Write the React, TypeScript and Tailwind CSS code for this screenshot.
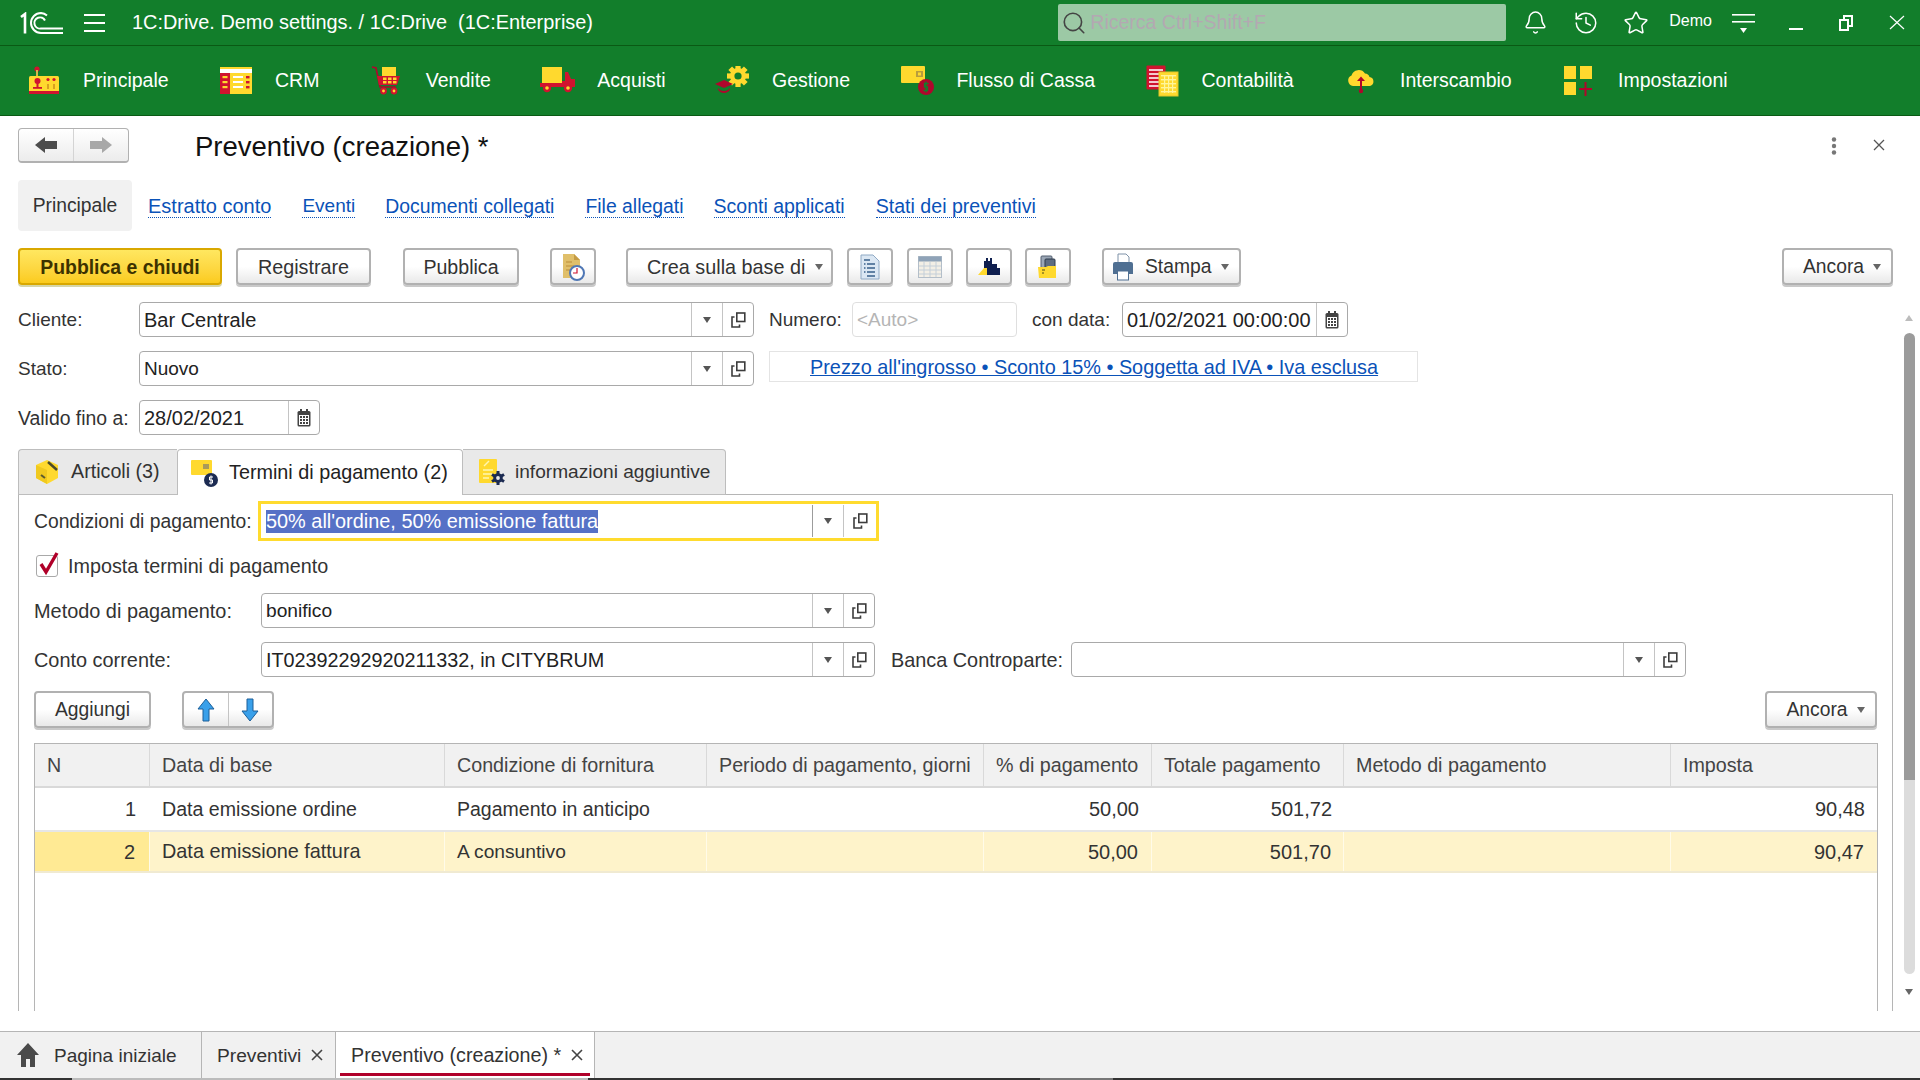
import React from "react";
import { Bell, History, Star, Search } from "lucide-react";

const Tri = ({ c = "#555" }: { c?: string }) => (
  <svg width="8" height="6" viewBox="0 0 8 6"><path d="M0 0H8L4 6Z" fill={c} /></svg>
);
const OpenIco = () => (
  <svg width="15" height="16" viewBox="0 0 15 16" fill="none" stroke="#3c3c3c" strokeWidth="1.6">
    <rect x="5.8" y="1" width="8" height="8.5" />
    <path d="M3.5 5H1V15H8.5V12.5" />
  </svg>
);
const CalIco = () => (
  <svg width="14" height="18" viewBox="0 0 14 18">
    <rect x="0.5" y="2" width="13" height="15.5" rx="1.5" fill="#444" />
    <rect x="3" y="0" width="2" height="4" fill="#444" />
    <rect x="9" y="0" width="2" height="4" fill="#444" />
    <rect x="2" y="6" width="10" height="10" fill="#fff" />
    {[7, 10, 13].map((y) => [3, 6, 9].map((x) => <rect key={x + "-" + y} x={x} y={y} width="2" height="2" fill="#444" />))}
  </svg>
);

function Combo({ cls, text, tcls = "" }: { cls: string; text?: string; tcls?: string }) {
  return (
    <div className={"flex h-[35px] border border-[#a9a9a9] rounded-[4px] bg-white " + cls}>
      <div className={"flex-1 pl-[4px] leading-[34px] text-[#222] whitespace-nowrap " + tcls}>{text}</div>
      <div className="w-[31px] border-l border-[#c4c4c4] flex items-center justify-center"><Tri /></div>
      <div className="w-[31px] border-l border-[#c4c4c4] flex items-center justify-center"><OpenIco /></div>
    </div>
  );
}
function DateField({ cls, text }: { cls: string; text: string }) {
  return (
    <div className={"flex h-[35px] border border-[#a9a9a9] rounded-[4px] bg-white " + cls}>
      <div className="flex-1 pl-[4px] leading-[34px] text-[#222] text-[20px] whitespace-nowrap">{text}</div>
      <div className="w-[31px] border-l border-[#c4c4c4] flex items-center justify-center"><CalIco /></div>
    </div>
  );
}
const btnBase =
  "flex items-center h-[37px] border-2 border-[#b1b1b1] rounded-[4px] bg-linear-to-b from-white via-white to-[#e9e9e9] shadow-[0_2px_0_#c9c9c9] text-[#333] whitespace-nowrap";
const btn = btnBase + " justify-center";
const Label = ({ children }: { children: React.ReactNode }) => <span className="pt-[2px]">{children}</span>;

function IconBtn({ cls, children }: { cls: string; children: React.ReactNode }) {
  return <div className={btn + " w-[46px] " + cls}>{children}</div>;
}

/* nav icons */
const Y = "#ffd92e";
const R = "#d0132f";
const D = "#b0062c";
const IcoMain = () => (
  <svg width="32" height="30" viewBox="0 0 32 30">
    <circle cx="9" cy="3" r="2.6" fill={R} />
    <rect x="8" y="4" width="2" height="7" fill="#d9b84a" />
    <rect x="1" y="10" width="30" height="17" rx="1.5" fill={Y} />
    <rect x="1" y="25" width="30" height="3" fill={R} />
    <circle cx="9.5" cy="15" r="3" fill={R} />
    <rect x="8.5" y="17" width="2" height="4" fill={R} />
    <rect x="5" y="21" width="9" height="1.8" fill={R} />
    <circle cx="20" cy="13.5" r="1.6" fill={R} />
    <circle cx="26" cy="13.5" r="1.6" fill={R} />
    <rect x="19" y="18" width="2" height="5" fill="#d9a020" />
    <rect x="25" y="18" width="2" height="5" fill="#d9a020" />
  </svg>
);
const IcoCrm = () => (
  <svg width="34" height="30" viewBox="0 0 34 30">
    <rect x="1" y="1" width="32" height="27" fill={Y} />
    <rect x="1" y="3" width="32" height="4" fill="#fff" />
    <rect x="1" y="7" width="10" height="21" fill={R} />
    {[10, 15, 20].map((y) => <rect key={y} x="3.5" y={y} width="5" height="2.2" fill={Y} />)}
    {[10, 15, 20].map((y) => <rect key={y} x="14" y={y} width="10" height="2" fill="#fff" />)}
    {[10, 15, 20].map((y) => <rect key={y} x="27" y={y} width="3.5" height="2.4" fill={R} />)}
  </svg>
);
const IcoCart = () => (
  <svg width="32" height="30" viewBox="0 0 32 30">
    <rect x="11" y="1" width="14" height="10" fill={Y} />
    <path d="M1 1L5 2L9 21H25" fill="none" stroke={D} strokeWidth="1.6" />
    <path d="M6 10H29L26 19H8Z" fill={R} />
    {[12, 17, 22].map((x) => <rect key={x} x={x} y="11.5" width="3.5" height="2.5" fill={Y} />)}
    {[12, 17, 22].map((x) => <rect key={x} x={x} y="15" width="3.5" height="2.5" fill={Y} />)}
    <circle cx="12.5" cy="25" r="3.4" fill={R} /><circle cx="12.5" cy="25" r="1.4" fill={Y} />
    <circle cx="23" cy="25" r="3.4" fill={R} /><circle cx="23" cy="25" r="1.4" fill={Y} />
  </svg>
);
const IcoTruck = () => (
  <svg width="36" height="28" viewBox="0 0 36 28">
    <rect x="2" y="0" width="20" height="16" fill={Y} />
    <path d="M0 16H22V1L22 14H25V5H28L31 12H35V20H0Z" fill={R} />
    <circle cx="7" cy="21" r="4.2" fill={R} /><circle cx="7" cy="21" r="1.8" fill={Y} />
    <circle cx="28" cy="21" r="4.2" fill={R} /><circle cx="28" cy="21" r="1.8" fill={Y} />
  </svg>
);
const IcoGear = () => (
  <svg width="36" height="30" viewBox="0 0 36 30">
    <g transform="translate(23 10)">
      {[0, 45, 90, 135].map((a) => <rect key={a} x="-2.6" y="-11" width="5.2" height="22" fill={Y} transform={`rotate(${a})`} />)}
      <circle r="8" fill={Y} /><circle r="3.6" fill="#127e2b" />
    </g>
    <path d="M0 18L9 14L18 18L9 22Z" fill={D} />
    <path d="M3 22C5 26 13 26 15 22L15 23.5C13 28 5 28 3 23.5Z" fill={D} />
  </svg>
);
const IcoWallet = () => (
  <svg width="33" height="30" viewBox="0 0 33 30">
    <rect x="0" y="0" width="24" height="17" rx="1" fill={Y} />
    <rect x="15" y="5" width="7" height="6" fill="#b99d3c" /><rect x="17" y="6.5" width="3" height="3" fill={Y} />
    <circle cx="25" cy="21" r="8" fill={D} />
    <path d="M27.5 17.5H23.5V21H26.5V24.5H22.5M25 15.5V26.5" fill="none" stroke="#127e2b" strokeWidth="1.3" />
  </svg>
);
const IcoBooks = () => (
  <svg width="33" height="32" viewBox="0 0 33 32">
    <rect x="0.5" y="0.5" width="19" height="24" rx="1" fill={R} />
    {[4, 8, 12, 16, 20].map((y) => <rect key={y} x="3" y={y} width="14" height="2" fill="#f3c9cf" />)}
    <rect x="13" y="7" width="19" height="24" fill={Y} stroke="#e3c62a" />
    {[10, 14, 18, 22, 26].map((y) => <rect key={y} x="15" y={y} width="15" height="1.4" fill="#fff59b" />)}
    {[18, 22, 26].map((x) => <rect key={x} x={x} y="10" width="1.2" height="18" fill="#fff59b" />)}
  </svg>
);
const IcoCloud = () => (
  <svg width="28" height="26" viewBox="0 0 28 26">
    <path d="M6 18A5.5 5.5 0 0 1 4.5 7.5A7.5 7.5 0 0 1 18 5.5A5 5 0 0 1 22.5 9A4.6 4.6 0 0 1 23 18Z" fill={Y} />
    <path d="M14 11V23" stroke={D} strokeWidth="2" /><path d="M10 13L14 8.5L18 13Z" fill={D} /><circle cx="14" cy="23" r="2.2" fill={D} />
  </svg>
);
const IcoGrid = () => (
  <svg width="32" height="31" viewBox="0 0 32 31">
    <rect x="1" y="1" width="12" height="13" fill={Y} />
    <rect x="17" y="1" width="12" height="13" fill={Y} />
    <rect x="1" y="17" width="12" height="13" fill={Y} />
    <path d="M22.5 17V31M16 24H29" stroke={D} strokeWidth="2" />
  </svg>
);

const navItems: [React.ReactNode, string][] = [
  [<IcoMain />, "Principale"],
  [<IcoCrm />, "CRM"],
  [<IcoCart />, "Vendite"],
  [<IcoTruck />, "Acquisti"],
  [<IcoGear />, "Gestione"],
  [<IcoWallet />, "Flusso di Cassa"],
  [<IcoBooks />, "Contabilità"],
  [<IcoCloud />, "Interscambio"],
  [<IcoGrid />, "Impostazioni"],
];

const Logo = () => (
  <svg width="44" height="22" viewBox="0 0 44 22" fill="none" stroke="#fff">
    <path d="M1 5L5 2V21.5" strokeWidth="2.6" />
    <path d="M27 3.5A10 10 0 0 0 21 1A10 10 0 0 0 21 21H43" strokeWidth="2" />
    <path d="M25 8.5A5.6 5.6 0 1 0 21 16.5H43" strokeWidth="2" />
  </svg>
);

const links: [string, string][] = [
  ["Estratto conto", "ml-[16px] text-[20px]"],
  ["Eventi", "ml-[31px] text-[19px]"],
  ["Documenti collegati", "ml-[30px] text-[19.4px]"],
  ["File allegati", "ml-[31px] text-[19.4px]"],
  ["Sconti applicati", "ml-[30px] text-[19.5px]"],
  ["Stati dei preventivi", "ml-[31px] text-[19.6px]"],
];

const cols = "grid grid-cols-[115px_295px_262px_277px_168px_192px_327px_207px]";
const heads = ["N", "Data di base", "Condizione di fornitura", "Periodo di pagamento, giorni", "% di pagamento", "Totale pagamento", "Metodo di pagamento", "Imposta"];

function Row({ cells, sizes, active }: { cells: string[]; sizes: string[]; active?: boolean }) {
  const pad = ["pl-[12px] pr-[14px] justify-end", "px-[12px]", "px-[12px]", "px-[12px]", "pl-[12px] pr-[13px] justify-end", "px-[12px] justify-end", "px-[12px]", "pl-[12px] pr-[13px] justify-end"];
  return (
    <div className={cols + (active ? " h-[41px] border-b-2 border-[#f0ead2] bg-[#fef3ca]" : " h-[44px] border-b-2 border-[#e6e6e6] bg-white")}>
      {cells.map((c, i) => (
        <div
          key={i}
          className={
            "flex items-center whitespace-nowrap " + pad[i] + " " + sizes[i] + " " +
            (active ? "border-r border-[#fffbe8] " : "") +
            (active && i === 0 ? "bg-[#ffea94] " : "")
          }
        >
          {c}
        </div>
      ))}
    </div>
  );
}

export default function App() {
  return (
    <div className="w-[1920px] h-[1080px] overflow-hidden flex flex-col bg-white font-['Liberation_Sans',Arial,sans-serif] text-[19.3px] text-[#333]">
      {/* title bar */}
      <header className="h-[46px] shrink-0 flex items-center pr-[15px] bg-[#127e2b] border-b border-[#0a5a14] text-white">
        <div className="ml-[20px]"><Logo /></div>
        <div className="ml-[20px] flex flex-col gap-[6px] w-[21px]">
          <div className="h-[2px] bg-white" /><div className="h-[2px] bg-white" /><div className="h-[2px] bg-white" />
        </div>
        <div className="ml-[27px] flex-1 text-[19.9px] whitespace-pre">1C:Drive. Demo settings. / 1C:Drive  (1C:Enterprise)</div>
        <div className="w-[448px] h-[37px] bg-[#9cc9a5] rounded-[2px] flex items-center pl-[3px] text-[19.5px] text-[#b3a8b2]">
          <Search size={26} strokeWidth={1.5} color="#444" />
          <span className="ml-[3px]">Ricerca Ctrl+Shift+F</span>
        </div>
        <Bell size={25} strokeWidth={1.4} className="ml-[17px]" />
        <History size={26} strokeWidth={1.4} className="ml-[25px]" />
        <Star size={26} strokeWidth={1.4} className="ml-[24px]" />
        <span className="ml-[20px] text-[16px] -mt-[3px]">Demo</span>
        <svg width="24" height="24" viewBox="0 0 24 24" className="ml-[20px]" fill="#fff">
          <rect x="0" y="3" width="23" height="1.6" /><rect x="0" y="10" width="23" height="1.6" /><path d="M8 17H15L11.5 22Z" />
        </svg>
        <div className="ml-[33px] w-[14px] h-[2px] bg-white mt-[12px]" />
        <svg width="14" height="16" viewBox="0 0 14 16" className="ml-[36px]" fill="none" stroke="#fff" strokeWidth="2">
          <rect x="5" y="1" width="8" height="10" /><rect x="1" y="5" width="8" height="10" fill="#127e2b" />
        </svg>
        <svg width="16" height="15" viewBox="0 0 16 15" className="ml-[36px]" fill="none" stroke="#fff" strokeWidth="1.2">
          <path d="M1 1L15 14M15 1L1 14" />
        </svg>
      </header>

      {/* section nav */}
      <nav className="h-[70px] shrink-0 flex items-center pl-[26px] gap-[49.4px] bg-[#127e2b] border-b border-[#0a5a14] text-white text-[19.5px]">
        {navItems.map(([ico, label]) => (
          <div key={label} className="flex items-center whitespace-nowrap">
            <div className="w-[36px] mr-[21px] flex justify-center">{ico}</div>
            <span>{label}</span>
          </div>
        ))}
      </nav>

      {/* title row */}
      <div className="h-[64px] shrink-0 flex pt-[12px] pl-[18px] pr-[35px]">
        <div className="flex w-[111px] h-[35px] border border-[#b1b1b1] border-b-2 rounded-[4px] bg-linear-to-b from-white to-[#ececec]">
          <div className="flex-1 flex items-center justify-center border-r border-[#d4d4d4]">
            <svg width="22" height="16" viewBox="0 0 22 16"><path d="M0 8L10 0V4H22V12H10V16Z" fill="#4d4d4d" /></svg>
          </div>
          <div className="flex-1 flex items-center justify-center">
            <svg width="22" height="16" viewBox="0 0 22 16"><path d="M22 8L12 0V4H0V12H12V16Z" fill="#a8a8a8" /></svg>
          </div>
        </div>
        <div className="ml-[66px] pt-[3px] flex-1 text-[27.5px] leading-[32px] text-[#111]">Preventivo (creazione) *</div>
        <svg width="6" height="18" viewBox="0 0 6 18" className="mt-[9px]" fill="#777">
          <circle cx="3" cy="2.5" r="2.2" /><circle cx="3" cy="9" r="2.2" /><circle cx="3" cy="15.5" r="2.2" />
        </svg>
        <svg width="12" height="12" viewBox="0 0 12 12" className="ml-[36px] mt-[11px]" fill="none" stroke="#555" strokeWidth="1.3">
          <path d="M1 1L11 11M11 1L1 11" />
        </svg>
      </div>

      {/* form links */}
      <div className="h-[51px] shrink-0 flex items-center pl-[18px]">
        <div className="w-[114px] h-[51px] pt-[2px] bg-[#f1f1f1] rounded-[4px] flex items-center justify-center text-[#333]">Principale</div>
        {links.map(([t, m]) => (
          <span key={t} className={m + " mt-[2px] text-[#0a52b8] border-b border-dotted border-[#0a52b8] leading-[22px] whitespace-nowrap"}>{t}</span>
        ))}
      </div>

      {/* toolbar */}
      <div className="h-[39px] mt-[17px] shrink-0 flex pl-[18px] pr-[27px]">
        <div className="flex items-center justify-center h-[37px] w-[204px] pt-[2px] border-2 border-[#d9a800] rounded-[4px] bg-linear-to-b from-[#ffe75f] to-[#fbcb1b] shadow-[0_2px_0_#d6d6a8] font-bold text-[#3c3200] text-[19.4px]">Pubblica e chiudi</div>
        <div className={btn + " ml-[14px] w-[135px] text-[19.8px]"}><Label>Registrare</Label></div>
        <div className={btn + " ml-[32px] w-[116px] text-[19.6px]"}><Label>Pubblica</Label></div>
        <IconBtn cls="ml-[31px]">
          <svg width="24" height="28" viewBox="0 0 24 28">
            <path d="M2 1H13L19 7V25H2Z" fill="#e0bf6a" /><path d="M13 1L19 7H13Z" fill="#c49b45" />
            <path d="M5 9H11M5 13H13M5 17H11" stroke="#c79f4a" strokeWidth="1.3" />
            <circle cx="16" cy="20" r="7" fill="#fff" stroke="#4f77b5" strokeWidth="2" /><path d="M16 15V20H12" stroke="#d0132f" strokeWidth="1.2" fill="none" />
          </svg>
        </IconBtn>
        <div className={btnBase + " ml-[30px] w-[207px] gap-[10px] pl-[19px] text-[19.8px]"}><Label>Crea sulla base di</Label><Tri c="#666" /></div>
        <IconBtn cls="ml-[14px]">
          <svg width="20" height="26" viewBox="0 0 20 26">
            <path d="M1 1H13L19 7V25H1Z" fill="#dbe7f3" stroke="#8fa9c4" />
            <path d="M4 6H10M7 10H15M4 10H5.5M7 14H15M4 14H5.5M7 18H15M4 18H5.5M7 22H15" stroke="#38608a" strokeWidth="1.3" />
          </svg>
        </IconBtn>
        <IconBtn cls="ml-[14px]">
          <svg width="24" height="22" viewBox="0 0 24 22">
            <rect x="0.5" y="0.5" width="23" height="21" fill="#f3efe6" stroke="#b3bec9" /><rect x="0.5" y="0.5" width="23" height="5" fill="#8fa3b8" />
            <path d="M6 6V21M12 6V21M18 6V21M1 10H23M1 14H23M1 18H23" stroke="#c4cfd9" />
          </svg>
        </IconBtn>
        <IconBtn cls="ml-[13px]">
          <svg width="24" height="18" viewBox="0 0 24 18">
            <path d="M1 17L7 10H14V17Z" fill={Y} />
            <path d="M7 10V3H9V0H11V3H13V0H15V6H20V10H23V17H10V10Z" fill="#0f1f4f" />
          </svg>
        </IconBtn>
        <IconBtn cls="ml-[13px]">
          <svg width="20" height="24" viewBox="0 0 20 24">
            <rect x="3" y="1" width="11" height="12" rx="1" fill="#9aa6b5" stroke="#525f70" />
            <rect x="7" y="4" width="10" height="10" rx="1" fill="#5d6c80" stroke="#2f3a4a" />
            <path d="M0 12H8L10 11H18V23H1Z" fill={Y} />
            <path d="M4 15H7M4 18H6" stroke="#8a7a20" strokeWidth="1.4" />
          </svg>
        </IconBtn>
        <div className={btnBase + " ml-[31px] w-[139px] pl-[8px]"}>
          <svg width="22" height="28" viewBox="0 0 22 28" className="mr-[11px]">
            <path d="M6 1H14L17 4V10H6Z" fill="#fff" stroke="#7f92a8" />
            <path d="M1 11Q1 9 3 9H19Q21 9 21 11V21H17V18H5V21H1Z" fill="#4f6f92" />
            <rect x="5.5" y="18" width="11" height="9" fill="#fff" stroke="#4f6f92" />
          </svg>
          <Label>Stampa</Label><div className="ml-[10px]"><Tri c="#666" /></div>
        </div>
        <div className="flex-1" />
        <div className={btn + " w-[111px] gap-[9px] pl-[9px]"}><Label>Ancora</Label><Tri c="#666" /></div>
      </div>

      {/* form */}
      <div className="h-[709px] mt-[15px] shrink-0 flex overflow-hidden">
        <div className="w-[1903px] shrink-0 pl-[18px] overflow-hidden">
          <div className="flex h-[35px] leading-[36px]">
            <div className="w-[121px] text-[19px]">Cliente:</div>
            <Combo cls="w-[615px]" text="Bar Centrale" tcls="text-[20px]" />
            <div className="ml-[15px] w-[83px] text-[19px]">Numero:</div>
            <div className="w-[165px] h-[35px] border border-[#dfdfdf] rounded-[4px] pl-[4px] leading-[33px] text-[#b5b5b5] text-[19px]">&lt;Auto&gt;</div>
            <div className="ml-[15px] w-[90px] text-[19px] whitespace-nowrap">con data:</div>
            <DateField cls="w-[226px]" text="01/02/2021 00:00:00" />
          </div>
          <div className="flex mt-[14px] h-[35px]">
            <div className="w-[121px] leading-[35px] text-[19px]">Stato:</div>
            <Combo cls="w-[615px]" text="Nuovo" tcls="text-[19px]" />
            <div className="ml-[15px] w-[649px] h-[31px] border border-[#e4e4e4] pl-[40px] leading-[30px] text-[#0a52b8] underline whitespace-nowrap text-[19.85px]">
              Prezzo all'ingrosso • Sconto 15% • Soggetta ad IVA • Iva esclusa
            </div>
          </div>
          <div className="flex mt-[14px] h-[35px]">
            <div className="w-[121px] leading-[36px] whitespace-nowrap text-[19.4px]">Valido fino a:</div>
            <DateField cls="w-[181px]" text="28/02/2021" />
          </div>

          {/* tabs */}
          <div className="flex mt-[14px] h-[46px] w-[1875px] border-b border-[#b5b5b5]">
            <div className="w-[159px] h-[46px] flex items-center pl-[15px] bg-[#e9e9e9] border border-[#bdbdbd] border-r-0 rounded-tl-[4px]">
              <svg width="26" height="26" viewBox="0 0 26 26">
                <path d="M13 1L24 6V19L13 25L2 19V6Z" fill={Y} />
                <path d="M2 6L13 11V25L2 19Z" fill="#f0c91f" />
                <path d="M14 3L23 11" stroke="#4a4a2a" strokeWidth="2.4" fill="none" />
                <path d="M7 16L11 19" stroke="#5a5a30" strokeWidth="2" />
              </svg>
              <span className="ml-[11px] whitespace-nowrap text-[19.7px]">Articoli (3)</span>
            </div>
            <div className="w-[286px] h-[46px] flex items-center pl-[12px] bg-white border border-[#bdbdbd] border-b-0 rounded-t-[4px] relative z-10">
              <svg width="28" height="28" viewBox="0 0 28 28">
                <rect x="1" y="1" width="21" height="15" rx="1" fill={Y} />
                <rect x="13" y="5" width="6" height="5" fill="#a99a5a" />
                <circle cx="21" cy="21" r="7" fill="#1c2b52" />
                <path d="M23 18H19.5V21H22.5V24H19M21 16.5V25.5" fill="none" stroke="#fff" strokeWidth="1" />
              </svg>
              <span className="ml-[11px] whitespace-nowrap text-[#222] text-[19.8px]">Termini di pagamento (2)</span>
            </div>
            <div className="w-[263px] h-[46px] flex items-center pl-[15px] bg-[#e9e9e9] border border-[#bdbdbd] border-l-0 rounded-tr-[4px]">
              <svg width="28" height="28" viewBox="0 0 28 28">
                <rect x="1" y="1" width="18" height="24" rx="1" fill={Y} />
                <path d="M5 12H15M5 16H15M5 20H11" stroke="#fff6b0" strokeWidth="1.6" />
                <path d="M6 8L11 3" stroke="#fff6b0" strokeWidth="1.4" />
                <g transform="translate(20 20)">
                  {[0, 60, 120].map((a) => <rect key={a} x="-1.5" y="-7" width="3" height="14" fill="#1c2b52" transform={`rotate(${a})`} />)}
                  <circle r="4.8" fill="#1c2b52" /><circle r="1.9" fill="#e9e9e9" />
                </g>
              </svg>
              <span className="ml-[9px] whitespace-nowrap text-[19.1px]">informazioni aggiuntive</span>
            </div>
          </div>

          {/* tab panel */}
          <div className="w-[1875px] h-[516px] border-x border-[#b5b5b5] pl-[15px] pr-[15px] overflow-hidden">
            <div className="flex items-center mt-[6px] h-[40px]">
              <div className="w-[224px] pt-[3px] whitespace-nowrap">Condizioni di pagamento:</div>
              <div className="w-[621px] h-[40px] border-[3px] border-[#ffdb2e] flex items-center bg-white">
                <div className="flex-1 pl-[5px] pt-[2px]">
                  <span className="bg-[#5671c6] text-white leading-[23px] inline-block whitespace-nowrap text-[19.9px]">50% all'ordine, 50% emissione fattura</span>
                </div>
                <div className="w-[31px] h-[32px] border-l border-[#9c9c9c] flex items-center justify-center"><Tri /></div>
                <div className="w-[33px] h-[32px] border-l border-[#c4c4c4] flex items-center justify-center"><OpenIco /></div>
              </div>
            </div>
            <div className="flex items-center h-[28px] mt-[11px] pl-[2px]">
              <div className="relative w-[22px] h-[22px] border border-[#a9a9a9] rounded-[3px] bg-white">
                <svg width="24" height="26" viewBox="0 0 24 26" className="absolute left-[1px] -top-[6px]">
                  <path d="M3 14L8 22L19 3" fill="none" stroke="#b00029" strokeWidth="3.4" />
                </svg>
              </div>
              <span className="ml-[10px] pt-[1px] text-[#333] text-[19.75px]">Imposta termini di pagamento</span>
            </div>
            <div className="flex items-center mt-[13px] h-[35px]">
              <div className="w-[227px] pt-[2px] whitespace-nowrap text-[19.9px]">Metodo di pagamento:</div>
              <Combo cls="w-[614px]" text="bonifico" tcls="text-[19.2px]" />
            </div>
            <div className="flex items-center mt-[14px] h-[35px]">
              <div className="w-[227px] pt-[2px] whitespace-nowrap text-[19.9px]">Conto corrente:</div>
              <Combo cls="w-[614px]" text="IT02392292920211332, in CITYBRUM" tcls="text-[19.8px]" />
              <div className="ml-[16px] w-[180px] pt-[2px] whitespace-nowrap text-[19.85px]">Banca Controparte:</div>
              <Combo cls="w-[615px]" />
            </div>
            <div className="flex mt-[14px] h-[40px]">
              <div className={btn + " w-[117px]"}><Label>Aggiungi</Label></div>
              <div className={btn + " ml-[31px] w-[92px]"}>
                <div className="flex-1 h-full flex items-center justify-center border-r border-[#c4c4c4]">
                  <svg width="18" height="24" viewBox="0 0 18 24"><path d="M9 1L17 11H12V23H6V11H1Z" fill="#39a0ea" stroke="#1c5f99" /></svg>
                </div>
                <div className="flex-1 h-full flex items-center justify-center">
                  <svg width="18" height="24" viewBox="0 0 18 24"><path d="M9 23L17 13H12V1H6V13H1Z" fill="#39a0ea" stroke="#1c5f99" /></svg>
                </div>
              </div>
              <div className="flex-1" />
              <div className={btn + " w-[112px] gap-[9px] pl-[9px]"}><Label>Ancora</Label><Tri c="#666" /></div>
            </div>

            {/* table */}
            <div className="mt-[12px] w-[1844px] h-[300px] border-x border-t border-[#b5b5b5] overflow-hidden">
              <div className={cols + " h-[44px] bg-[#f1f1f1] border-b-2 border-[#d9d9d9] text-[19.7px]"}>
                {heads.map((h) => (
                  <div key={h} className="pl-[12px] pt-[1px] flex items-center border-r border-[#d9d9d9] whitespace-nowrap text-[#444]">{h}</div>
                ))}
              </div>
              <Row
                sizes={["text-[20px]", "text-[19.6px] pt-[1px]", "text-[19.5px] pt-[1px]", "", "text-[20px]", "text-[20px]", "", "text-[20px]"]}
                cells={["1", "Data emissione ordine", "Pagamento in anticipo", "", "50,00", "501,72", "", "90,48"]}
              />
              <Row
                active
                sizes={["text-[20px]", "text-[19.85px]", "text-[19.2px] pt-[1px]", "", "text-[20px]", "text-[20px]", "", "text-[20px]"]}
                cells={["2", "Data emissione fattura", "A consuntivo", "", "50,00", "501,70", "", "90,47"]}
              />
            </div>
          </div>
        </div>

        {/* scrollbar */}
        <div className="w-[17px] shrink-0 flex flex-col items-center pt-[13px] pr-[5px]">
          <svg width="8" height="6" viewBox="0 0 8 6"><path d="M0 6H8L4 0Z" fill="#bcbcbc" /></svg>
          <div className="w-[11px] h-[447px] mt-[12px] bg-[#9b9b9b] rounded-t-[6px]" />
          <div className="w-[11px] h-[194px] bg-[#dcdcdc] rounded-b-[6px]" />
          <svg width="8" height="6" viewBox="0 0 8 6" className="mt-[15px]"><path d="M0 0H8L4 6Z" fill="#666" /></svg>
        </div>
      </div>

      {/* open windows bar */}
      <div className="mt-[20px] h-[47px] shrink-0 flex bg-[#f1f1f1] border-t border-[#b5b5b5]">
        <div className="w-[202px] flex items-center pl-[17px] border-r border-[#b5b5b5]">
          <svg width="22" height="24" viewBox="0 0 22 24"><path d="M11 0L22 12H18V24H13V16H9V24H4V12H0Z" fill="#4a4a4a" /></svg>
          <span className="ml-[15px] pt-[2px] text-[19px]">Pagina iniziale</span>
        </div>
        <div className="w-[134px] flex items-center pl-[15px] border-r border-[#b5b5b5]">
          <span className="pt-[2px] text-[19.2px]">Preventivi</span>
          <svg width="12" height="12" viewBox="0 0 12 12" className="ml-[10px]" fill="none" stroke="#444" strokeWidth="1.6"><path d="M1 1L11 11M11 1L1 11" /></svg>
        </div>
        <div className="relative w-[259px] flex items-center pl-[15px] bg-white border-r border-[#b5b5b5]">
          <span className="whitespace-nowrap pt-[2px] text-[19.7px]">Preventivo (creazione) *</span>
          <svg width="12" height="12" viewBox="0 0 12 12" className="ml-[10px]" fill="none" stroke="#444" strokeWidth="1.6"><path d="M1 1L11 11M11 1L1 11" /></svg>
          <div className="absolute left-[4px] right-[4px] bottom-[2px] h-[3px] bg-[#b0002a]" />
        </div>
      </div>
      <div className="flex-1 flex">
        <div className="w-[72px] bg-[#333]" />
        <div className="w-[516px] bg-[#bcbcbc]" />
        <div className="w-[452px] bg-[#333]" />
        <div className="w-[73px] bg-[#777]" />
        <div className="flex-1 bg-[#333]" />
      </div>
    </div>
  );
}
